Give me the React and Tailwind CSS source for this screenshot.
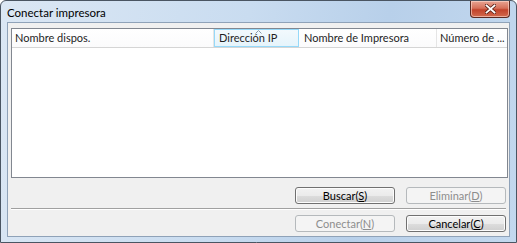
import React from 'react';

function Btn({ label, hot, disabled }) {
  return (
    <button
      disabled={disabled}
      className={
        disabled
          ? 'w-[100px] h-[17px] rounded-[3px] border border-[#b5b9bc] bg-[#f4f4f4] text-[#8d8d8d] text-[11px] leading-[15px] flex items-center justify-center'
          : 'w-[100px] h-[17px] rounded-[3px] border border-[#707070] bg-[linear-gradient(#f2f2f2_0%,#ebebeb_50%,#dddddd_51%,#cfcfcf_100%)] text-[#000] text-[11px] leading-[15px] flex items-center justify-center shadow-[inset_0_0_0_1px_#fcfcfc]'
      }
    >
      {label}(<span className="underline">{hot}</span>)
    </button>
  );
}

function HeaderCell({ children, className }) {
  return (
    <div className={'h-full flex items-center border-r border-[#e5e5e5] whitespace-nowrap overflow-hidden ' + className}>
      {children}
    </div>
  );
}

export default function App() {
  return (
    <div
      className="w-[517px] h-[243px] flex flex-col rounded-t-[6px] border border-[#4a5562] bg-[linear-gradient(100deg,#dbe7f4_0%,#c9dcf0_45%,#b8d0ea_70%,#c3d8ee_100%)] overflow-hidden"
      style={{ fontFamily: 'Lato, "Noto Sans", sans-serif' }}
    >
      {/* title bar */}
      <div className="h-[21px] flex items-start justify-between pl-[6px] pr-[6px] shrink-0">
        <div className="text-[11.5px] text-[#000] leading-none pt-[6px]">Conectar impresora</div>
        <div className="w-[40px] h-[17px] rounded-b-[4px] border border-t-0 border-[#5c2a22] bg-[linear-gradient(#e8a493_0%,#d6705a_45%,#c2432b_55%,#d26a4e_100%)] flex items-center justify-center shadow-[inset_0_0_0_1px_rgba(255,220,210,0.6)]">
          <svg width="11" height="10" viewBox="0 0 11 10">
            <path d="M1.5 1.5 L9.5 8.5 M9.5 1.5 L1.5 8.5" stroke="#5a2218" strokeWidth="3.4" strokeLinecap="square" />
            <path d="M1.5 1.5 L9.5 8.5 M9.5 1.5 L1.5 8.5" stroke="#ffffff" strokeWidth="1.8" strokeLinecap="square" />
          </svg>
        </div>
      </div>

      {/* client area */}
      <div className="flex-1 mx-[6px] mb-[6px] border border-[#8fa2b8] flex flex-col bg-[#f0f0f0] pl-[3px] pr-[1px] pt-[5px] pb-[4px]">
        {/* list view */}
        <div className="h-[150px] border border-[#828790] bg-white flex flex-col">
          <div className="h-[19px] flex border-b border-[#d5d5d5] text-[11px] text-[#1e1e1e] bg-[linear-gradient(#ffffff,#fbfbfc)]">
            <HeaderCell className="w-[202px] pl-[3px]">Nombre dispos.</HeaderCell>
            <div className="relative w-[85px] h-full flex items-center pl-[4px] border border-[#96d9f9] bg-[linear-gradient(#f2f9fd,#e6f4fb)] whitespace-nowrap">
              <svg className="absolute left-[40px] top-[0px]" width="7" height="4" viewBox="0 0 7 4">
                <path d="M0.5 3.5 L3.5 0.5 L6.5 3.5" fill="none" stroke="#8a9aa8" strokeWidth="1" />
              </svg>
              Dirección IP
            </div>
            <HeaderCell className="w-[138px] pl-[5px]">Nombre de Impresora</HeaderCell>
            <div className="flex-1 h-full flex items-center pl-[3px] whitespace-nowrap overflow-hidden">Número de ...</div>
          </div>
          <div className="flex-1" />
        </div>

        {/* buttons */}
        <div className="flex justify-end gap-[11px] pr-[2px] mt-[9px]">
          <Btn label="Buscar" hot="S" />
          <Btn label="Eliminar" hot="D" disabled />
        </div>
        <div className="h-px bg-[#a0a0a0] mt-[4px] mr-[2px] shadow-[0_1px_0_#ffffff]" />
        <div className="flex justify-end gap-[11px] pr-[2px] mt-[6px]">
          <Btn label="Conectar" hot="N" disabled />
          <Btn label="Cancelar" hot="C" />
        </div>
      </div>
    </div>
  );
}
